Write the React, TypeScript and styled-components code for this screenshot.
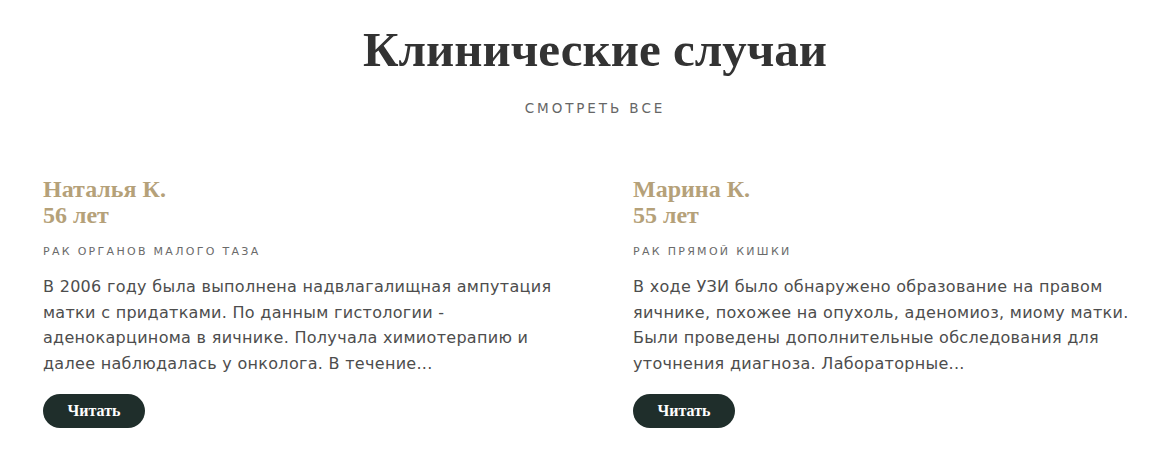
import React from "react";
import styled, { createGlobalStyle } from "styled-components";

const Global = createGlobalStyle`
  html, body { margin: 0; padding: 0; background: #ffffff; }
  body { font-family: "DejaVu Sans", sans-serif; }
`;

const Section = styled.section`
  width: 1160px;
  height: 454px;
  box-sizing: border-box;
  padding: 22px 43px 0;
  display: flex;
  flex-direction: column;
`;

const Header = styled.header`
  display: flex;
  flex-direction: column;
  align-items: center;
  padding-left: 30px;
`;

const Title = styled.h2`
  margin: 0;
  font-family: "Liberation Serif", "DejaVu Serif", serif;
  font-weight: 700;
  font-size: 49px;
  line-height: 56px;
  color: #333333;
`;

const SeeAll = styled.a`
  margin-top: 22px;
  font-family: "DejaVu Sans", sans-serif;
  font-size: 13.5px;
  letter-spacing: 2.9px;
  color: #666666;
  text-decoration: none;
  line-height: 16px;
`;

const Grid = styled.div`
  margin-top: 60px;
  display: grid;
  grid-template-columns: 525px 515px;
  column-gap: 65px;
`;

const Card = styled.article`
  display: flex;
  flex-direction: column;
  align-items: flex-start;
`;

const Name = styled.h3`
  margin: 0;
  font-family: "Liberation Serif", "DejaVu Serif", serif;
  font-weight: 700;
  font-size: 24px;
  line-height: 26px;
  color: #b5a179;
`;

const Tag = styled.div`
  margin-top: 17px;
  font-family: "DejaVu Sans", sans-serif;
  font-size: 11px;
  letter-spacing: 2.3px;
  color: #6a6a6a;
  line-height: 14px;
`;

const Text = styled.p`
  margin: 15px 0 0;
  font-family: "DejaVu Sans", sans-serif;
  font-size: 16px;
  letter-spacing: 0.3px;
  line-height: 25.7px;
  color: #4d4d4d;
`;

const ReadButton = styled.button`
  margin-top: 17px;
  width: 102px;
  height: 34px;
  border: none;
  border-radius: 17px;
  background: #1f2e2b;
  color: #ffffff;
  font-family: "Liberation Serif", "DejaVu Serif", serif;
  font-weight: 700;
  font-size: 16px;
  cursor: pointer;
`;

const cases = [
  {
    name: "Наталья К.",
    age: "56 лет",
    tag: "РАК ОРГАНОВ МАЛОГО ТАЗА",
    text:
      "В 2006 году была выполнена надвлагалищная ампутация матки с придатками. По данным гистологии - аденокарцинома в яичнике. Получала химиотерапию и далее наблюдалась у онколога. В течение...",
  },
  {
    name: "Марина К.",
    age: "55 лет",
    tag: "РАК ПРЯМОЙ КИШКИ",
    text:
      "В ходе УЗИ было обнаружено образование на правом яичнике, похожее на опухоль, аденомиоз, миому матки. Были проведены дополнительные обследования для уточнения диагноза. Лабораторные...",
  },
];

export default function App() {
  return (
    <>
      <Global />
      <Section>
        <Header>
          <Title>Клинические случаи</Title>
          <SeeAll href="#">СМОТРЕТЬ ВСЕ</SeeAll>
        </Header>
        <Grid>
          {cases.map((c) => (
            <Card key={c.name}>
              <Name>
                {c.name}
                <br />
                {c.age}
              </Name>
              <Tag>{c.tag}</Tag>
              <Text>{c.text}</Text>
              <ReadButton>Читать</ReadButton>
            </Card>
          ))}
        </Grid>
      </Section>
    </>
  );
}
